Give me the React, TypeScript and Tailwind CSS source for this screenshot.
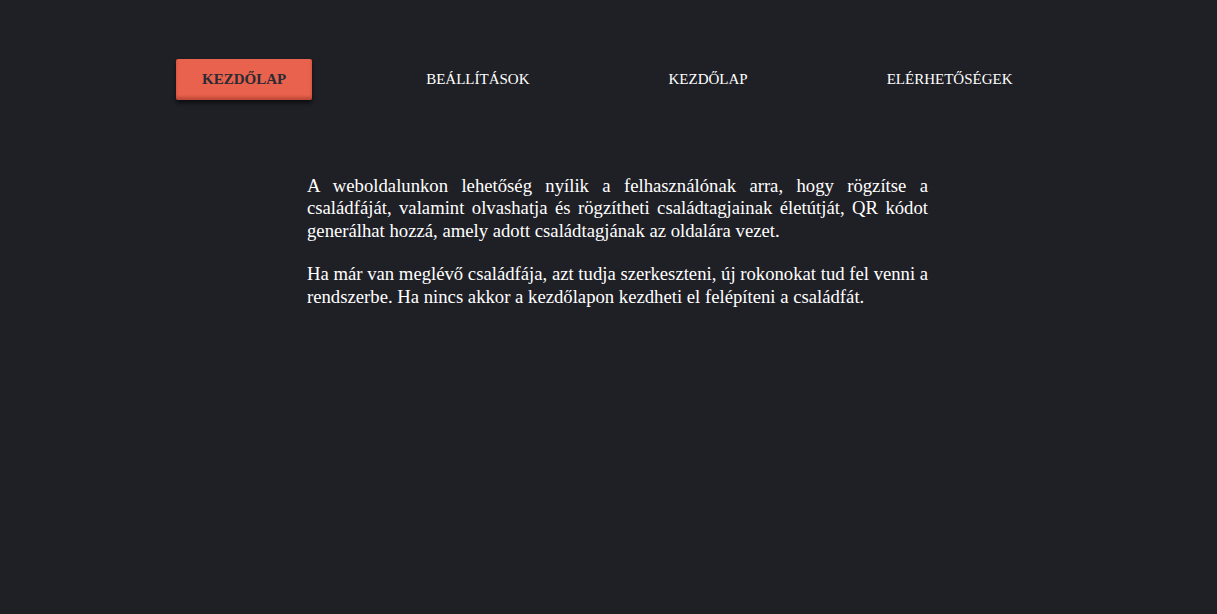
import React from "react";

export default function App() {
  const serif = { fontFamily: '"Liberation Serif", "Times New Roman", serif' };
  return (
    <div className="min-h-[614px] w-full bg-[#1f2026]" style={serif}>
      <nav className="flex justify-start gap-[89px] pl-[176px] pt-[59px]">
        <a className="flex h-[41px] items-center rounded-[2px] bg-[#e8624d] px-[26px] text-[15px] font-bold text-[#2b2a33] shadow-[0_3px_4px_rgba(0,0,0,0.6),inset_0_-3px_3px_rgba(120,30,20,0.35)]">
          KEZDŐLAP
        </a>
        <a className="flex h-[41px] items-center px-[25px] text-[15px] text-white">BEÁLLÍTÁSOK</a>
        <a className="flex h-[41px] items-center px-[25px] text-[15px] text-white">KEZDŐLAP</a>
        <a className="flex h-[41px] items-center px-[25px] text-[15px] text-white">ELÉRHETŐSÉGEK</a>
      </nav>
      <div className="ml-[307px] mt-[75px] text-[18.7px] leading-[22.4px] text-white">
        <p className="w-[621px] text-justify">
          A weboldalunkon lehetőség nyílik a felhasználónak arra, hogy rögzítse a családfáját, valamint olvashatja és rögzítheti családtagjainak életútját, QR kódot generálhat hozzá, amely adott családtagjának az oldalára vezet.
        </p>
        <p className="mt-[21px] w-[640px]">
          Ha már van meglévő családfája, azt tudja szerkeszteni, új rokonokat tud fel venni a
          <br />
          rendszerbe. Ha nincs akkor a kezdőlapon kezdheti el felépíteni a családfát.
        </p>
      </div>
    </div>
  );
}
